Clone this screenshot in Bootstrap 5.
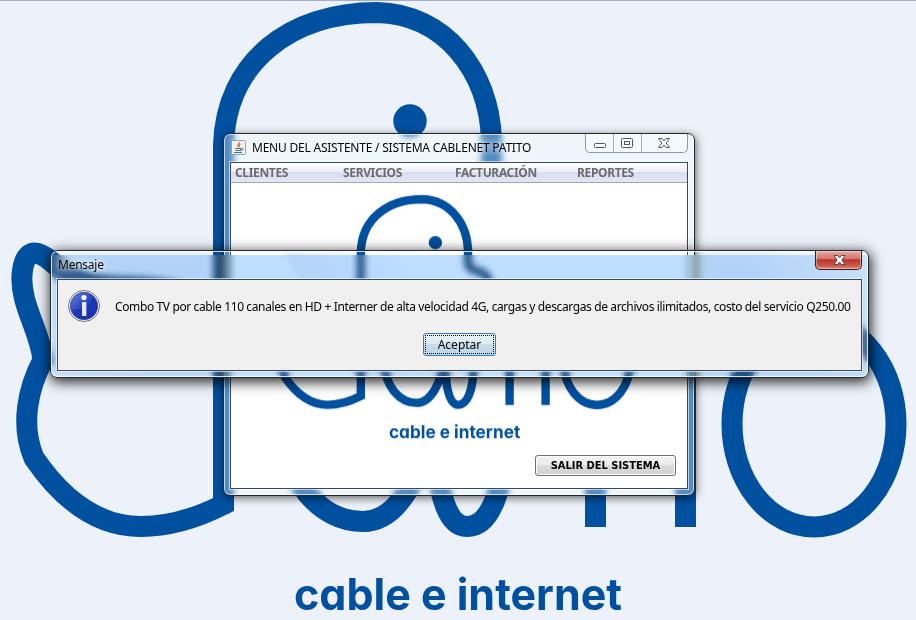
<!DOCTYPE html>
<html lang="es">
<head>
<meta charset="utf-8">
<meta name="viewport" content="width=device-width, initial-scale=1">
<title>Sistema Cablenet Patito</title>
<link href="https://cdn.jsdelivr.net/npm/bootstrap@5.3.0/dist/css/bootstrap.min.css" rel="stylesheet">
<style>
body{width:916px;height:620px;background:#edf2fa;font-family:"Noto Sans","Open Sans",sans-serif;font-size:12px;line-height:16px;color:#000}
.desk{width:916px;height:620px;border-top:1px solid #a3b0c9}
.desk-logo{left:0;top:-1px}
.brand{font-family:Inter,sans-serif;font-weight:700;font-feature-settings:"cv11"}
.win{border:1px solid #20272e;border-radius:7px}
.win-menu{left:223px;top:132px;width:472px;height:363px;padding:0 6px 6px;backdrop-filter:blur(3px);background:rgba(240,255,255,.35);box-shadow:inset 0 0 0 1px rgba(255,255,255,.65),1px 2px 8px rgba(0,0,0,.6)}
.win-msg{left:50px;top:249px;width:819px;height:128px;padding:0 6px 6px;backdrop-filter:blur(3px) url(#aero);background:linear-gradient(60deg,rgba(255,255,255,.2) 0,rgba(255,255,255,0) 14%,rgba(255,255,255,0) 34%,rgba(120,160,210,.15) 34.5%,rgba(255,255,255,0) 48%,rgba(255,255,255,0) 85%,rgba(255,255,255,.3));box-shadow:inset 0 0 0 1px rgba(255,255,255,.8),1px 3px 13px 1px rgba(0,0,0,.85)}
.win-menu .bar{height:28px}
.win-msg .bar{height:28px}
.ttl{text-shadow:0 0 6px #fff,0 0 6px #fff;white-space:nowrap}
.t-menu{margin:6px 0 0 6px;letter-spacing:-.22px}
.t-msg{margin:6px 0 0 1px;letter-spacing:-.25px}
.java{margin:6px 0 0 1px}
.pane{border:1px solid #37485b;box-shadow:0 0 0 1px rgba(255,255,255,.6)}
.menus{display:grid;grid-template-columns:108px 112px 122px 1fr;height:20px;padding-left:4px;background:linear-gradient(#fff 0,#eceff8 45%,#d9ddf0 48%,#e2e6f5 100%);border-bottom:1px solid #a5a5ad;color:#6b6b6b;font-weight:700;line-height:19px;letter-spacing:-.35px}
.ctl{height:19px;border:1px solid #8e989f;border-top:0;border-radius:0 0 5px 5px;background:rgba(255,255,255,.3)}
.ctl span+span{border-left:1px solid #a4adb3}
.ctl-x{width:47px;height:19px;border:1px solid #3d1a22;border-top:0;border-radius:0 0 5px 5px;background:linear-gradient(#e6a89f 0,#d4736a 45%,#b9332a 48%,#cc5748 80%,#dd8a74);box-shadow:inset 0 0 0 1px rgba(255,255,255,.4)}
.b-exit{width:141px;height:21px;margin:1px 11px 0 0;border:1px solid #707070;border-radius:3px;background:linear-gradient(#f3f3f3 0,#ebebeb 48%,#dcdcdc 50%,#cfcfcf 100%);box-shadow:inset 0 0 0 1px #fcfcfc;font:700 11px/19px "DejaVu Sans Condensed","DejaVu Sans",sans-serif;font-stretch:condensed;padding:0;color:#000}
.b-ok{width:73px;height:23px;margin-top:10px;border:1px solid #3c7fb1;border-radius:3px;background:linear-gradient(#e6f2f8 0,#dcebf3 48%,#c7dde9 50%,#bcd7e6 100%);padding:1px;line-height:17px;color:#000;font-size:12px}
.b-ok span{border:1px dotted #000}
.face{background:#f0f0f0}
.msg-row{height:34px;margin-top:9px;padding-left:9px}
.msg{white-space:nowrap;margin:1px 0 0 14px;letter-spacing:-.38px}
</style>
</head>
<body class="overflow-hidden">
<main class="desk position-relative overflow-hidden">
<svg class="desk-logo position-absolute" width="916" height="620" viewBox="0 0 916 620">
<defs>
<filter id="aero" color-interpolation-filters="sRGB"><feColorMatrix values=".6 0 0 0 .14  0 .8 0 0 .07  0 0 1.27 0 -.27  0 0 0 1 0"/></filter>
<g id="duck">
<g fill="none" stroke="#0050a0" stroke-width="21">
<path d="M542 240V215C534 180 491 205 491.500 165V140C489 70 444 14 377 12.500C290 12.500 226 62 223.500 145V504.500C197 518 168 526.500 141 526.500C100 526.500 64 502 34 458C20 425 28 388 43 360C40 330 20 305 22 275C24 250 35 247 52 262C70 280 95 287 130 287C170 287 195 295 223 312"/>
<path d="M282 420C284 480 320 521.500 363 521.500C398 521.500 425 475 435 400V440C438 500 449 526.500 467 526.500C490 526.500 505 490 505 430V360"/>
<path d="M595.500 360V527M685.500 360V527"/>
<ellipse cx="814" cy="424" rx="82" ry="103"/>
</g>
<circle cx="410" cy="121" r="16.700" fill="#0050a0"/>
<text class="brand" x="294" y="610" font-size="44" textLength="328" lengthAdjust="spacingAndGlyphs" fill="#0050a0">cable e internet</text>
</g>
</defs>
<use href="#duck"/>
</svg>

<section class="win win-menu position-absolute d-flex flex-column">
<header class="bar d-flex align-items-start">
<svg class="java flex-shrink-0" width="15" height="15" viewBox="0 0 15 15"><rect x=".5" y=".5" width="14" height="14" rx="1" fill="#f3f3f3" stroke="#9aa0a8"/><path d="M8.500 2C9 4 5.500 4.500 7 7M9.500 4C7.500 5 9 6 7.800 7.300" fill="none" stroke="#e27b26" stroke-width="1.300"/><path d="M4 8.500H10V10.500H4.500M10 8.500C13 8 12.500 10 10 10.500M3 12.500H11" fill="none" stroke="#4c6f91"/></svg>
<span class="ttl t-menu">MENU DEL ASISTENTE / SISTEMA CABLENET PATITO</span>
<div class="ctl d-flex ms-auto">
<span><svg class="d-block" width="27" height="18"><rect x="8.500" y="9.500" width="11" height="4" rx="1" fill="#fff" stroke="#535666"/></svg></span>
<span><svg class="d-block" width="27" height="18"><rect x="7.500" y="4.500" width="11" height="9" rx="1" fill="#fff" stroke="#535666"/><rect x="10.500" y="7.500" width="5" height="3" fill="#fff" stroke="#535666"/></svg></span>
<span><svg class="d-block" width="45" height="18"><path d="M16.500 4.500H20L22 7L24 4.500H27.500L24.200 9L27.500 13.500H24L22 11L20 13.500H16.500L19.800 9Z" fill="#fff" stroke="#535666"/></svg></span>
</div>
</header>
<div class="pane bg-white flex-grow-1 d-flex flex-column overflow-hidden">
<nav class="menus flex-shrink-0"><span>CLIENTES</span><span>SERVICIOS</span><span>FACTURACIÓN</span><span>REPORTES</span></nav>
<div class="flex-grow-1 d-flex flex-column overflow-hidden">
<svg class="d-block flex-shrink-0" width="456" height="271" viewBox="231 183 456 271"><use href="#duck" transform="translate(271.400 194.200) scale(.4)"/></svg>
<button class="b-exit align-self-end flex-shrink-0" type="button">SALIR DEL SISTEMA</button>
</div>
</div>
</section>

<section class="win win-msg position-absolute d-flex flex-column">
<header class="bar d-flex align-items-start justify-content-between">
<span class="ttl t-msg">Mensaje</span>
<div class="ctl-x"><svg class="d-block" width="45" height="18"><path d="M18 4.500H21.500L23.500 7L25.500 4.500H29L25.800 9L29 13.500H25.500L23.500 11L21.500 13.500H18L21.200 9Z" fill="#fff" stroke="#54455a"/></svg></div>
</header>
<div class="pane face flex-grow-1 d-flex flex-column align-items-center">
<div class="d-flex align-self-stretch align-items-center msg-row">
<svg class="flex-shrink-0" width="34" height="34" viewBox="0 0 34 34"><defs><linearGradient id="ib" x1="0" y1="0" x2="1" y2="1"><stop offset="0" stop-color="#6685dd"/><stop offset=".5" stop-color="#2643bc"/><stop offset="1" stop-color="#1c2fb0"/></linearGradient></defs><circle cx="17" cy="17" r="15.500" fill="#fff" stroke="#737373"/><circle cx="17" cy="17" r="13.700" fill="url(#ib)" stroke="#23358e" stroke-width=".7"/><path d="M5 20C10 21 24 19 26 8C30 13 31 19 27 25C20 33 8 31 5 20Z" fill="#1430b4" opacity=".6"/><circle cx="17" cy="8.600" r="2.600" fill="#fff"/><rect x="15" y="13" width="4.400" height="14" rx=".5" fill="#e8e8ee"/></svg>
<span class="msg">Combo TV por cable 110 canales en HD + Interner de alta velocidad 4G, cargas y descargas de archivos ilimitados, costo del servicio Q250.00</span>
</div>
<button class="b-ok d-flex" type="button"><span class="flex-grow-1 text-center">Aceptar</span></button>
</div>
</section>
</main>
<script src="https://cdn.jsdelivr.net/npm/bootstrap@5.3.0/dist/js/bootstrap.bundle.min.js"></script>
</body>
</html>
